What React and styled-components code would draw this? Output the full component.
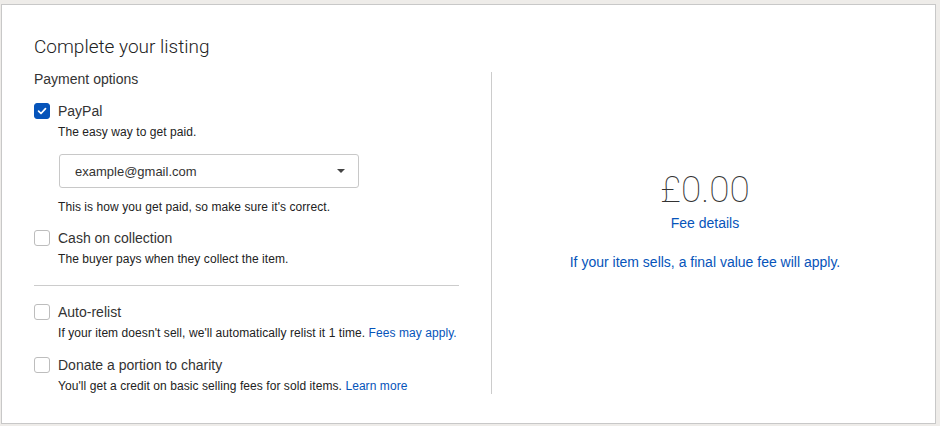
import styled, { createGlobalStyle } from "styled-components"

const GlobalStyle = createGlobalStyle`
	html, body {
		margin: 0;
		padding: 0;
		background: #eeece9;
	}
	body {
		font-family: "Liberation Sans", Arial, sans-serif;
		color: #333;
	}
`

const Check = () => (
	<svg width="10" height="10" viewBox="0 0 10 10">
		<path d="M1.6 5.2 L4 7.5 L8.5 2.6" fill="none" stroke="#fff" strokeWidth="1.7" strokeLinecap="round" strokeLinejoin="round" />
	</svg>
)

const Option = ({ label, checked, children }) => (
	<OptionBlock>
		<OptionRow>
			<Box checked={checked}>{checked && <Check />}</Box>
			<OptionLabel>{label}</OptionLabel>
		</OptionRow>
		{children}
	</OptionBlock>
)

const App = () => {
	return (
		<Page>
			<GlobalStyle />
			<Panel>
				<Title>Complete your listing</Title>
				<Columns>
					<Left>
						<Heading>Payment options</Heading>
						<Option label="PayPal" checked>
							<Hint>The easy way to get paid.</Hint>
							<Select>
								<span>example@gmail.com</span>
								<Caret />
							</Select>
							<Hint spaced>This is how you get paid, so make sure it's correct.</Hint>
						</Option>
						<Option label="Cash on collection">
							<Hint>The buyer pays when they collect the item.</Hint>
						</Option>
						<Divider />
						<Option label="Auto-relist">
							<Hint>
								If your item doesn't sell, we'll automatically relist it 1 time. <Link>Fees may apply.</Link>
							</Hint>
						</Option>
						<Option label="Donate a portion to charity">
							<Hint>
								You'll get a credit on basic selling fees for sold items. <Link>Learn more</Link>
							</Hint>
						</Option>
					</Left>
					<Split />
					<Right>
						<Price>£0.00</Price>
						<FeeLink>Fee details</FeeLink>
						<FeeNote>If your item sells, a final value fee will apply.</FeeNote>
					</Right>
				</Columns>
			</Panel>
		</Page>
	)
}

export default App

const Page = styled.div`
	padding: 4px 4px 2px 1px;
	height: 426px;
	box-sizing: border-box;
`

const Panel = styled.div`
	background: #fff;
	border: 1px solid #c8c8c8;
	height: 420px;
	box-sizing: border-box;
	padding: 30px 17px 0 32px;
`

const Title = styled.h1`
	margin: 0;
	font-family: Roboto, "Liberation Sans", sans-serif;
	font-weight: 300;
	font-size: 19px;
	line-height: 24px;
	color: #222;
`

const Columns = styled.div`
	display: flex;
	margin-top: 11px;
`

const Left = styled.div`
	width: 425px;
	flex: none;
`

const Heading = styled.div`
	font-size: 14px;
	line-height: 18px;
	color: #333;
`

const OptionBlock = styled.div`
	margin-top: 14px;
	&:last-child {
		margin-top: 15px;
	}
`

const OptionRow = styled.div`
	display: flex;
	align-items: center;
	gap: 8px;
	height: 18px;
`

const Box = styled.span`
	width: 16px;
	height: 16px;
	box-sizing: border-box;
	border-radius: 3px;
	display: flex;
	align-items: center;
	justify-content: center;
	background: ${p => (p.checked ? "#0654ba" : "#fff")};
	border: 1px solid ${p => (p.checked ? "#0654ba" : "#bdbdbd")};
`

const OptionLabel = styled.span`
	font-size: 14px;
	line-height: 18px;
	color: #333;
`

const Hint = styled.div`
	font-size: 12px;
	line-height: 16px;
	letter-spacing: 0.07px;
	color: #222;
	margin: ${p => (p.spaced ? "11px" : "4px")} 0 0 24px;
`

const Link = styled.span`
	color: #0654ba;
`

const Select = styled.div`
	margin: 14px 0 0 25px;
	width: 300px;
	height: 34px;
	box-sizing: border-box;
	border: 1px solid #c8c8c8;
	border-radius: 3px;
	display: flex;
	align-items: center;
	justify-content: space-between;
	padding: 0 13px 0 15px;
	font-size: 13px;
	color: #333;
`

const Caret = styled.span`
	width: 0;
	height: 0;
	border-left: 4px solid transparent;
	border-right: 4px solid transparent;
	border-top: 4px solid #444;
`

const Divider = styled.div`
	height: 1px;
	background: #ccc;
	margin-top: 18px;
	margin-bottom: 17px;
`

const Split = styled.div`
	width: 1px;
	background: #ccc;
	margin: 2px 0 0 32px;
	flex: none;
`

const Right = styled.div`
	flex: 1;
	display: flex;
	flex-direction: column;
	align-items: center;
	padding-top: 100px;
`

const Price = styled.div`
	font-family: Roboto, "Liberation Sans", sans-serif;
	font-weight: 100;
	font-size: 37px;
	line-height: 40px;
	color: #333;
`

const FeeLink = styled.div`
	margin-top: 4px;
	font-size: 14px;
	line-height: 18px;
	color: #0654ba;
`

const FeeNote = styled.div`
	margin-top: 21px;
	font-size: 14px;
	line-height: 18px;
	color: #0654ba;
`
